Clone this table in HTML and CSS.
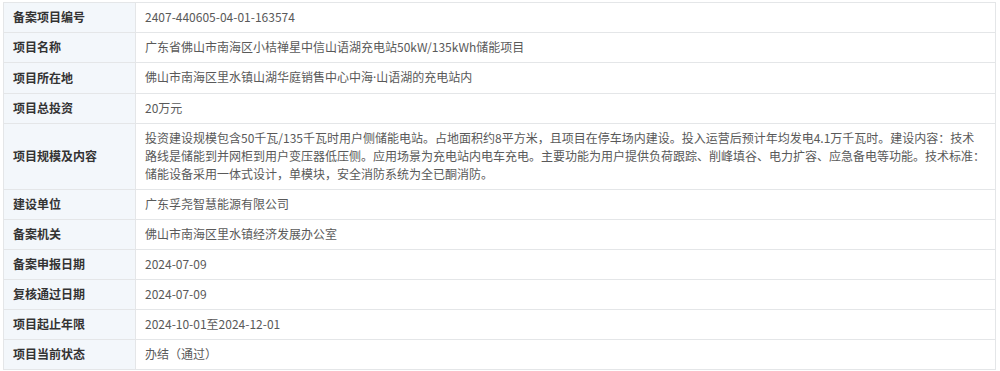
FILE: index.html
```html
<!DOCTYPE html>
<html lang="zh-CN">
<head>
<meta charset="utf-8">
<title>备案项目信息</title>
<link rel="stylesheet" href="styles.css">
</head>
<body>
<table class="info">
  <tbody>
    <tr><th>备案项目编号</th><td>2407-440605-04-01-163574</td></tr>
    <tr><th>项目名称</th><td>广东省佛山市南海区小桔禅星中信山语湖充电站50kW/135kWh储能项目</td></tr>
    <tr><th>项目所在地</th><td>佛山市南海区里水镇山湖华庭销售中心中海<span class="latin">·</span>山语湖的充电站内</td></tr>
    <tr><th>项目总投资</th><td>20万元</td></tr>
    <tr><th>项目规模及内容</th><td>投资建设规模包含50千瓦/135千瓦时用户侧储能电站。占地面积约8平方米，且项目在停车场内建设。投入运营后预计年均发电4.1万千瓦时。建设内容：技术路线是储能到并网柜到用户变压器低压侧。应用场景为充电站内电车充电。主要功能为用户提供负荷跟踪、削峰填谷、电力扩容、应急备电等功能。技术标准：储能设备采用一体式设计，单模块，安全消防系统为全已酮消防。</td></tr>
    <tr><th>建设单位</th><td>广东孚尧智慧能源有限公司</td></tr>
    <tr><th>备案机关</th><td>佛山市南海区里水镇经济发展办公室</td></tr>
    <tr><th>备案申报日期</th><td>2024-07-09</td></tr>
    <tr><th>复核通过日期</th><td>2024-07-09</td></tr>
    <tr><th>项目起止年限</th><td>2024-10-01至2024-12-01</td></tr>
    <tr><th>项目当前状态</th><td>办结（通过）</td></tr>
  </tbody>
</table>
</body>
</html>
```

FILE: styles.css
```css
html, body {
  margin: 0;
  padding: 0;
  background: #ffffff;
}

body {
  padding: 2px 5px 0 3px;
  font-family: "Microsoft YaHei", "Noto Sans CJK SC", "Noto Sans", sans-serif;
  font-size: 12px;
  line-height: 18px;
}

.info {
  width: 993px;
  border-collapse: collapse;
  table-layout: fixed;
}

.info th,
.info td {
  border: 1px solid #e4e6e8;
  padding: 5px 9px 6px 9px;
  text-align: left;
  vertical-align: middle;
}

.info th {
  width: 113px;
  background: #f3f7fb;
  color: #333333;
  font-weight: bold;
}

.info td {
  color: #595959;
  font-weight: normal;
}

.latin {
  font-family: "Noto Sans", sans-serif;
}
```
